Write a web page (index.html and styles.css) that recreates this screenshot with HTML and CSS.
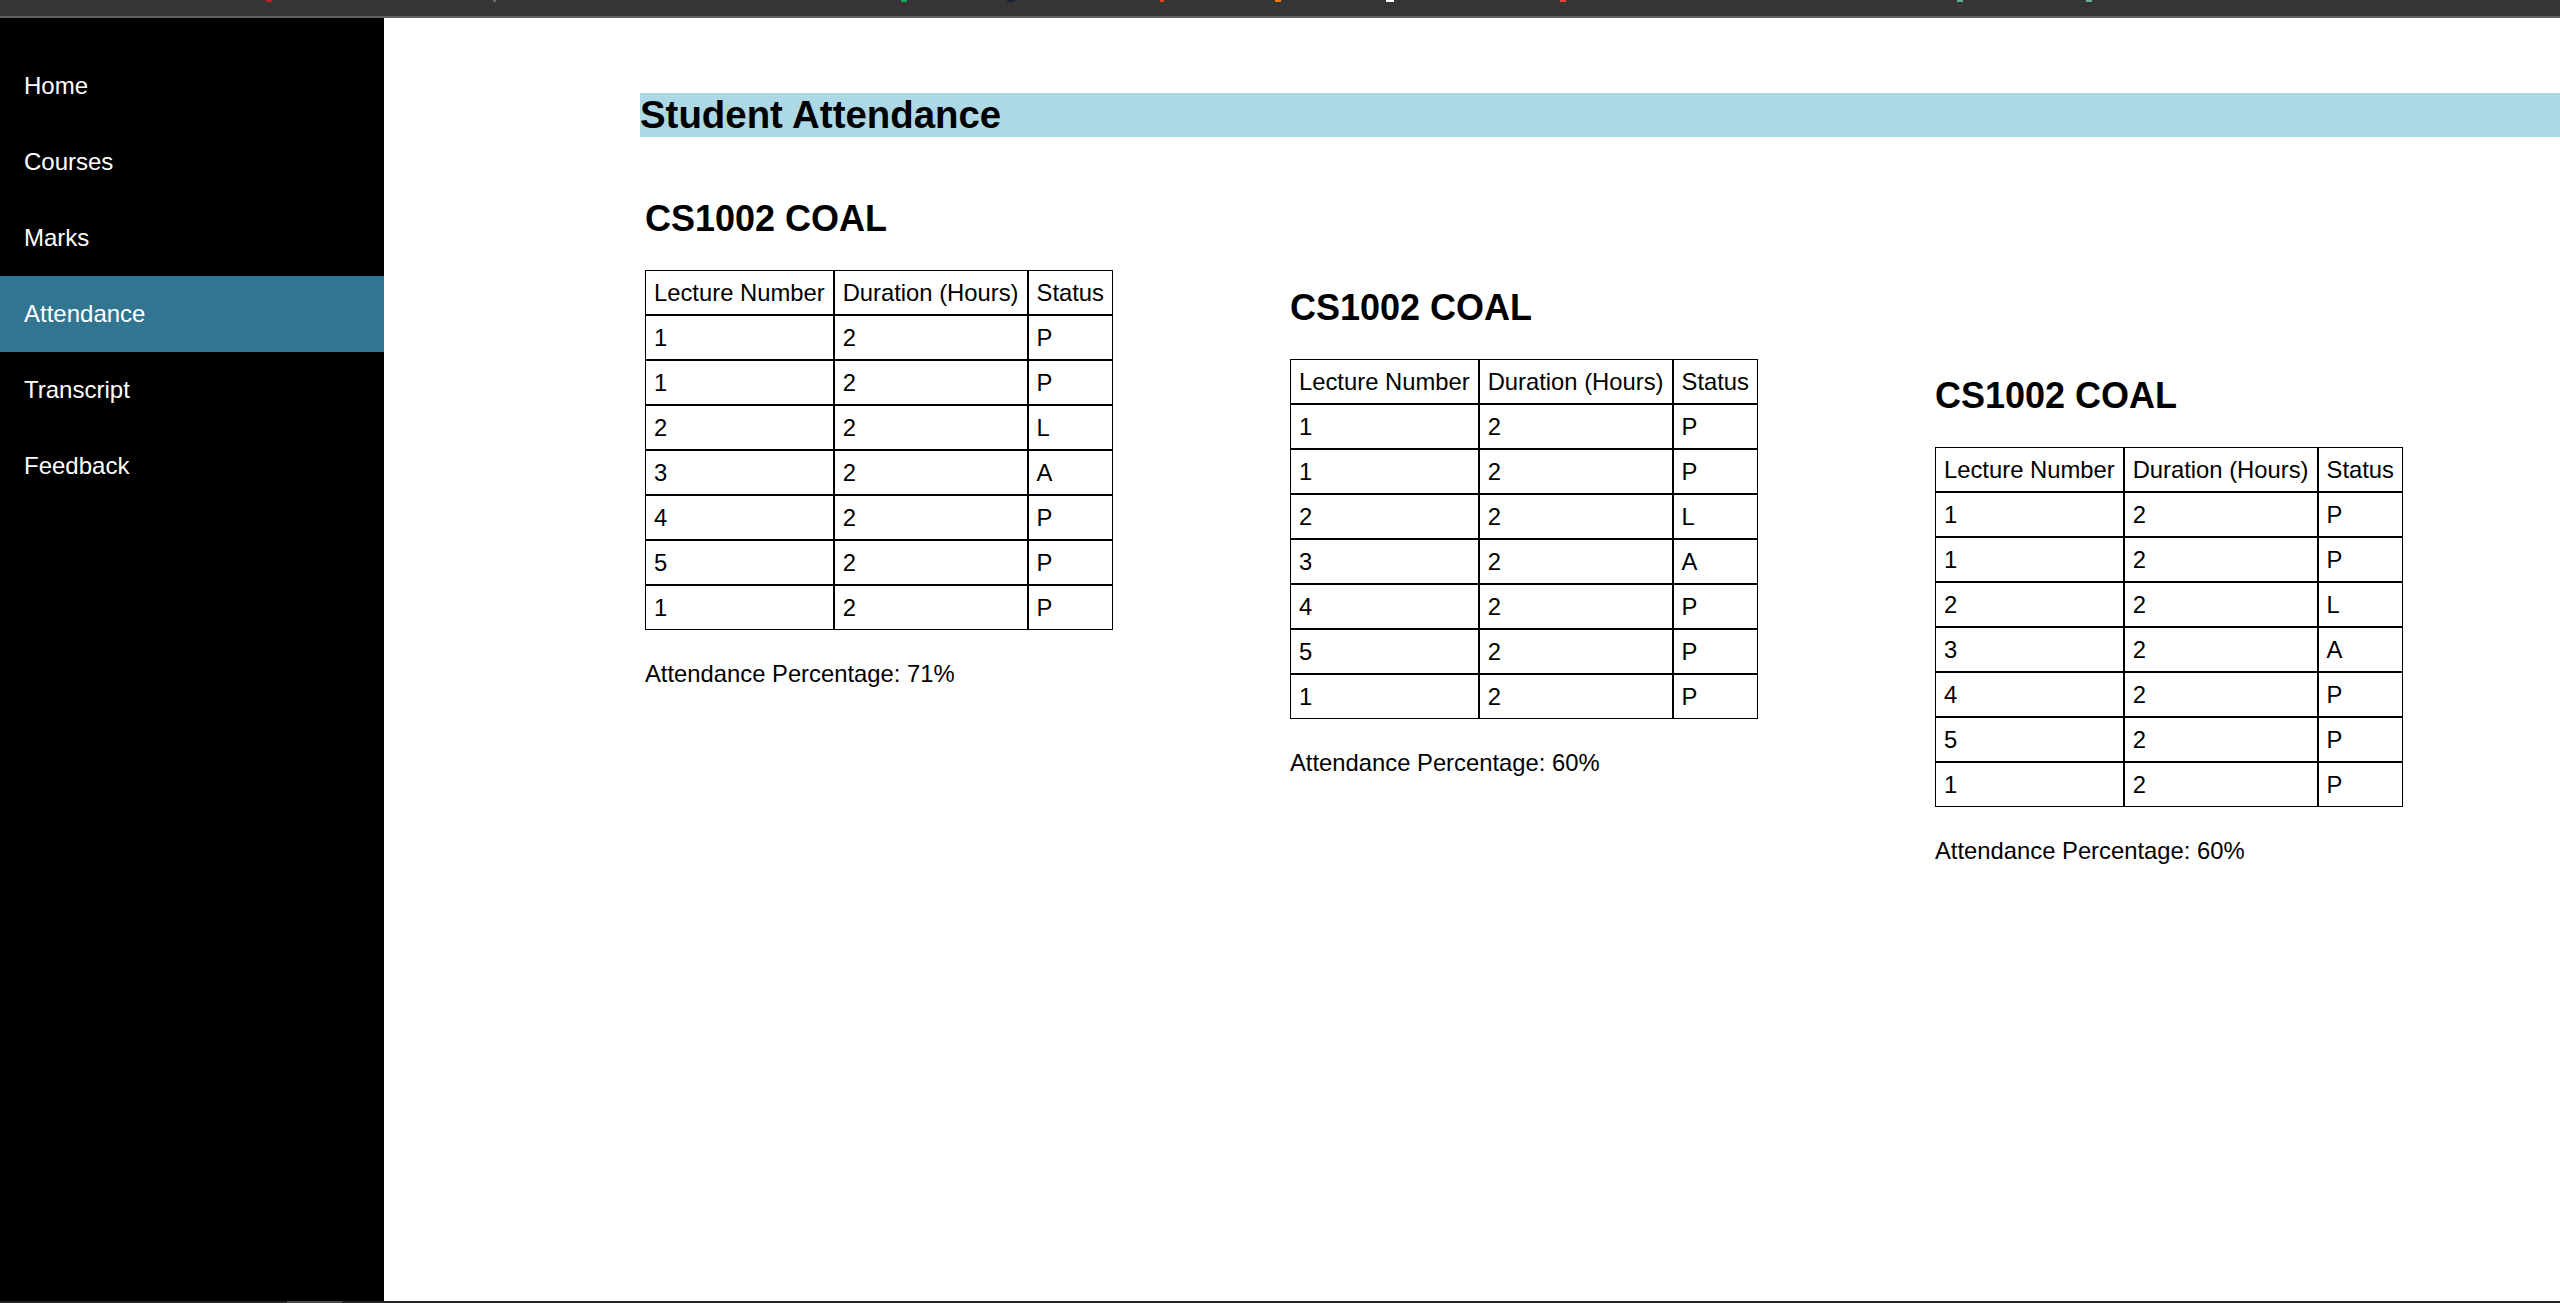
FILE: index.html
```html
<!DOCTYPE html>
<html lang="en">
<head>
<meta charset="utf-8">
<title>Student Attendance</title>
<link rel="stylesheet" href="styles.css">
</head>
<body>
<div class="chrome">
  <span class="mark m1"></span>
  <span class="mark m2"></span>
  <span class="mark m3"></span>
  <span class="mark m4"></span>
  <span class="mark m5"></span>
  <span class="mark m6"></span>
  <span class="mark m7"></span>
  <span class="mark m8"></span>
  <span class="mark m9"></span>
  <span class="mark m10"></span>
</div>
<div class="window">
  <nav class="sidebar">
    <a class="nav-item" href="#">Home</a>
    <a class="nav-item" href="#">Courses</a>
    <a class="nav-item" href="#">Marks</a>
    <a class="nav-item active" href="#">Attendance</a>
    <a class="nav-item" href="#">Transcript</a>
    <a class="nav-item" href="#">Feedback</a>
  </nav>
  <main class="main">
    <h1 class="page-title">Student Attendance</h1>
    <div class="courses">
      <section class="course">
        <h2 class="course-title">CS1002 COAL</h2>
        <table class="att-table">
          <tr><th>Lecture Number</th><th>Duration (Hours)</th><th>Status</th></tr>
          <tr><td>1</td><td>2</td><td>P</td></tr>
          <tr><td>1</td><td>2</td><td>P</td></tr>
          <tr><td>2</td><td>2</td><td>L</td></tr>
          <tr><td>3</td><td>2</td><td>A</td></tr>
          <tr><td>4</td><td>2</td><td>P</td></tr>
          <tr><td>5</td><td>2</td><td>P</td></tr>
          <tr><td>1</td><td>2</td><td>P</td></tr>
        </table>
        <p class="percentage">Attendance Percentage: 71%</p>
      </section>
      <section class="course course-step-1">
        <h2 class="course-title">CS1002 COAL</h2>
        <table class="att-table">
          <tr><th>Lecture Number</th><th>Duration (Hours)</th><th>Status</th></tr>
          <tr><td>1</td><td>2</td><td>P</td></tr>
          <tr><td>1</td><td>2</td><td>P</td></tr>
          <tr><td>2</td><td>2</td><td>L</td></tr>
          <tr><td>3</td><td>2</td><td>A</td></tr>
          <tr><td>4</td><td>2</td><td>P</td></tr>
          <tr><td>5</td><td>2</td><td>P</td></tr>
          <tr><td>1</td><td>2</td><td>P</td></tr>
        </table>
        <p class="percentage">Attendance Percentage: 60%</p>
      </section>
      <section class="course course-step-2">
        <h2 class="course-title">CS1002 COAL</h2>
        <table class="att-table">
          <tr><th>Lecture Number</th><th>Duration (Hours)</th><th>Status</th></tr>
          <tr><td>1</td><td>2</td><td>P</td></tr>
          <tr><td>1</td><td>2</td><td>P</td></tr>
          <tr><td>2</td><td>2</td><td>L</td></tr>
          <tr><td>3</td><td>2</td><td>A</td></tr>
          <tr><td>4</td><td>2</td><td>P</td></tr>
          <tr><td>5</td><td>2</td><td>P</td></tr>
          <tr><td>1</td><td>2</td><td>P</td></tr>
        </table>
        <p class="percentage">Attendance Percentage: 60%</p>
      </section>
    </div>
  </main>
</div>
<div class="statusbar"><span class="scroll-thumb"></span></div>
</body>
</html>
```
FILE: styles.css
```css
html, body {
  margin: 0;
  padding: 0;
}

body {
  font-family: "Liberation Sans", Arial, sans-serif;
  font-size: 24px;
  color: #000;
  background: #fff;
  height: 1303px;
  overflow: hidden;
  display: flex;
  flex-direction: column;
}

/* browser chrome strip */
.chrome {
  flex: none;
  height: 16px;
  background: #353535;
  border-bottom: 2px solid #616161;
  display: flex;
  align-items: flex-start;
}

.mark {
  display: block;
  width: 6px;
  height: 2px;
}
.m1 { margin-left: 266px; background: #b3262a; }
.m2 { margin-left: 221px; background: #6a6a6a; width: 3px; }
.m3 { margin-left: 405px; background: #1aa05a; }
.m4 { margin-left: 100px; background: #1b2236; width: 8px; }
.m5 { margin-left: 145px; background: #e2471c; width: 4px; }
.m6 { margin-left: 111px; background: #f0790f; }
.m7 { margin-left: 105px; background: #ffffff; width: 8px; }
.m8 { margin-left: 166px; background: #ea4335; }
.m9 { margin-left: 391px; background: #5fae8e; }
.m10 { margin-left: 123px; background: #6dae96; }

.window {
  flex: 1;
  min-height: 0;
  display: flex;
}

/* sidebar */
.sidebar {
  flex: none;
  width: 384px;
  background: #000;
  padding-top: 30px;
  display: flex;
  flex-direction: column;
}

.nav-item {
  display: block;
  color: #fff;
  text-decoration: none;
  font-size: 24px;
  line-height: 28px;
  padding: 24px;
}

.nav-item.active {
  background: #327590;
}

/* main */
.main {
  flex: 1;
  min-width: 0;
  padding: 75px 0 0 256px;
}

.page-title {
  margin: 0;
  background: #add8e6;
  font-size: 38.4px;
  line-height: 44px;
  font-weight: bold;
}

.courses {
  display: grid;
  grid-template-columns: repeat(3, 645px);
  align-items: start;
  padding: 61px 0 0 5px;
}

.course-step-1 { margin-top: 89px; }
.course-step-2 { margin-top: 177px; }

.course-title {
  font-size: 36px;
  font-weight: bold;
  margin: 0 0 30px;
}

.att-table {
  border-spacing: 0;
}

.att-table th,
.att-table td {
  border: 1px solid #000;
  padding: 8px;
  text-align: left;
  font-weight: normal;
  font-size: 23.8px;
  line-height: 27px;
}

.percentage {
  margin: 30px 0 0;
  font-size: 23.8px;
}

.statusbar {
  flex: none;
  height: 2px;
  background: #252525;
}

.scroll-thumb {
  display: block;
  margin-left: 287px;
  width: 55px;
  height: 2px;
  background: #4a4a4a;
}
```
